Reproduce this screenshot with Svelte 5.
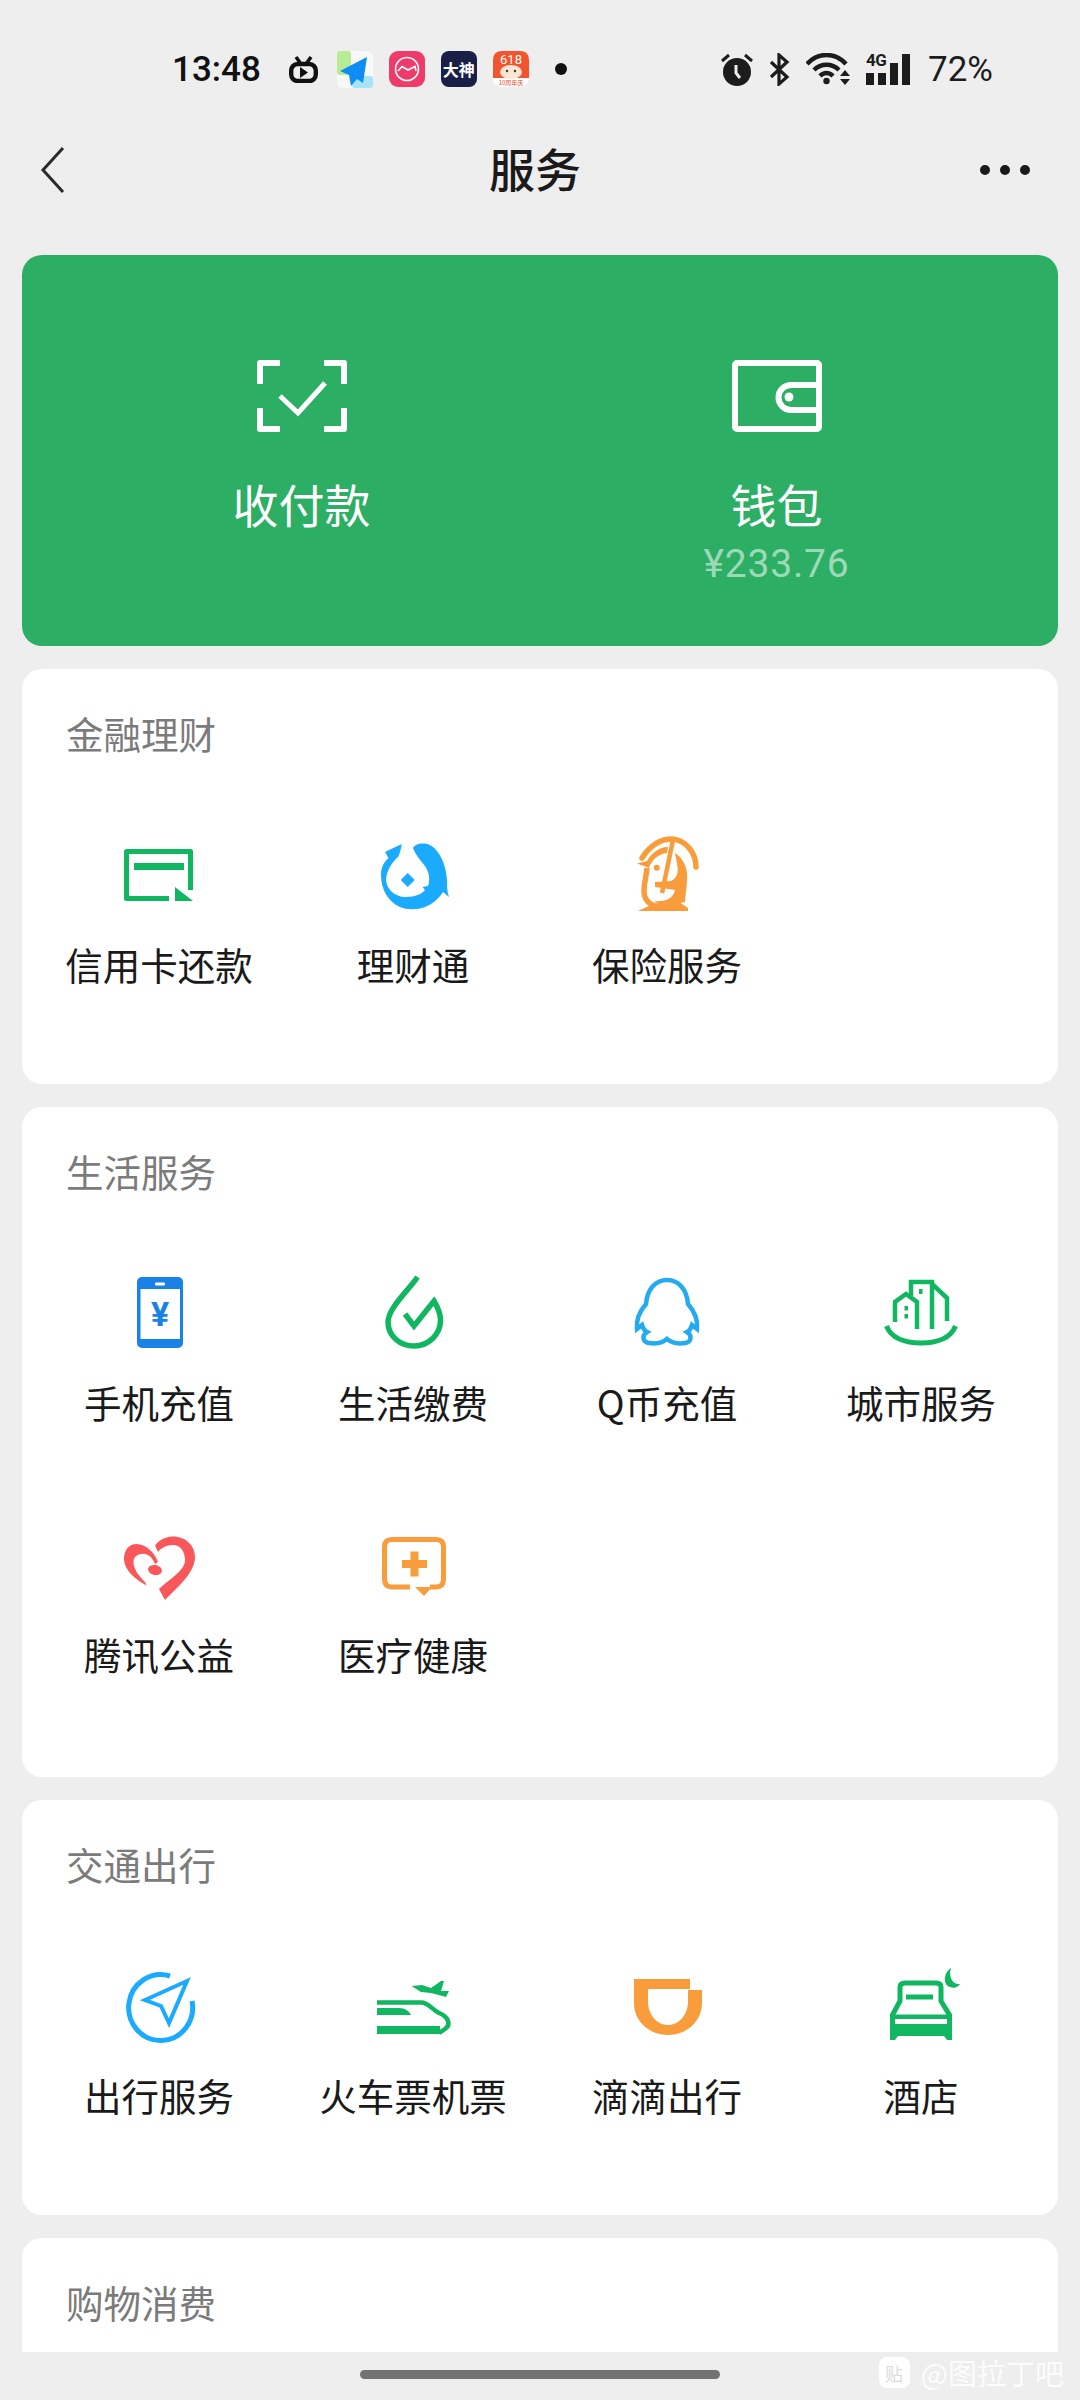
<script>
  // Service grid, grouped into sections
  const sections = [
    {
      title: "金融理财",
      items: [
        { icon: "card", label: "信用卡还款" },
        { icon: "fish", label: "理财通" },
        { icon: "shield", label: "保险服务" },
      ],
    },
    {
      title: "生活服务",
      items: [
        { icon: "phone", label: "手机充值" },
        { icon: "drop", label: "生活缴费" },
        { icon: "qq", label: "Q币充值" },
        { icon: "city", label: "城市服务" },
        { icon: "heart", label: "腾讯公益" },
        { icon: "medical", label: "医疗健康" },
      ],
    },
    {
      title: "交通出行",
      items: [
        { icon: "compass", label: "出行服务" },
        { icon: "train", label: "火车票机票" },
        { icon: "didi", label: "滴滴出行" },
        { icon: "hotel", label: "酒店" },
      ],
    },
    { title: "购物消费", items: [] },
  ];

  const GREEN = "#10b760";
  const BLUE = "#1aabff";
  const ORANGE = "#f99d3c";
</script>

{#snippet icon(name)}
  <svg class="cell-icon" viewBox="0 0 80 80">
    {#if name === "card"}
      <path d="M71.5 56V17.5H7.5V64.5H50" fill="none" stroke={GREEN} stroke-width="5" stroke-linejoin="round" />
      <rect x="15" y="29" width="50" height="7" fill={GREEN} />
      <path d="M56 53L74 67H56Z" fill={GREEN} />
    {:else if name === "fish"}
      <path
        d="M40 14C42 10 47 9 52 9.5C64 11 73 28 74 46C74 52 74 58 76 63L70 58C66 64 60 70 52 73C44 76 34 76 27 73C15 68 8 55 8 41C8 33 11 28 15.5 24L12 18L28.7 10C28 15 27 19 25.3 22.7C19 28 14 36 13 45C13 55 22 63 33 63C42 63 49 60 52 56L49.5 53L55 52C57.5 46 56 38 52 32C47 26 42 20 40 14Z"
        fill={BLUE}
      />
      <path d="M34.7 39L41.7 46L34.7 53L27.7 46Z" fill={BLUE} />
    {:else if name === "shield"}
      <g fill="none" stroke={ORANGE}>
        <path d="M15 24C24 10 34 5 45 5C60 6 69 20 69 33" stroke-width="5.5" stroke-linecap="round" />
        <path d="M46 6L35 59" stroke-width="4.5" />
        <path d="M20 34C19 44 17 50 17 57C17 65 22 72 32 72" stroke-width="5.5" />
      </g>
      <g fill={ORANGE}>
        <path d="M10 29.5L20 27C23 21 31 13 41 13L40 19C32 20 25 25 22 34Z" />
        <path d="M11 77C18 74 24 70 30 70L52 68L61 74V77Z" />
        <path d="M48 19C56 24 61 34 60 44C60 54 58 62 58 68L40 72C35 72 30 70 27 67C36 68 46 66 48 56L28 53V48L44 47C50 44 52 38 50 30Z" />
        <circle cx="29.7" cy="33.7" r="3" />
      </g>
    {:else if name === "phone"}
      <rect x="18" y="5" width="46" height="71" rx="5" fill="#1a82e6" />
      <rect x="21.5" y="17" width="39.5" height="50" fill="#fff" />
      <rect x="36" y="10.5" width="10" height="3" rx="1" fill="#fff" />
      <text x="41" y="54" class="yen">¥</text>
    {:else if name === "drop"}
      <path
        d="M44.5 5C36 18 15 36 15 50C15 64 27 74 41 74C56 74 67.5 62 67.5 48C67.5 41 64 34 61 29L41 54L32 42"
        fill="none"
        stroke={GREEN}
        stroke-width="5.5"
      />
    {:else if name === "qq"}
      <path
        d="M40 8C28 8 20 18 19 32C12 40 9 48 10 57L15 53C16 56 18 59 20 60C15 63 15 70 22 71C28 72 35 71 40 67C45 71 52 72 58 71C65 70 65 63 60 60C62 59 64 56 65 53L70 57C71 48 68 40 61 32C60 18 52 8 40 8Z"
        fill="none"
        stroke="#24aaf0"
        stroke-width="4.5"
      />
    {:else if name === "city"}
      <g fill="none" stroke={GREEN} stroke-width="4.5">
        <path d="M5.5 54C10 66 24 71 40 71C56 71 70 66 74.5 54" stroke-width="5" />
        <path d="M30 24V10H51V57" />
        <path d="M51 12L66 26V49" />
        <path d="M14 50V30L25 22L36 30V57" />
      </g>
      <g fill={GREEN}>
        <rect x="38" y="17" width="3.5" height="5" />
        <rect x="23.5" y="34" width="3.5" height="4.5" />
        <rect x="23.5" y="42" width="3.5" height="4.5" />
      </g>
    {:else if name === "heart"}
      <g fill="#f9575a">
        <path d="M36 21.5C41 15 48 12.5 54 12.5C67 12.5 76 22 76 33C76 48 60 62 46 76L40 65C52 54 66 46 66 36.5C66 28 62 21.5 55 21C48 20.5 42 24 39 28Z" />
        <path d="M39 38C36 29 27 20 17.5 20C9 20 5 27 5 35C5 46 16 55 27.5 61.5L26 58C20 52 14 45 14.5 37C15 32 20 29 26 30C31 31 34 35 36 40Z" />
        <ellipse cx="36" cy="46" rx="7" ry="5" transform="rotate(12 36 46)" />
      </g>
    {:else if name === "medical"}
      <path
        d="M37 63H19Q11.5 63 11.5 55V23Q11.5 15.5 19 15.5H63Q70.5 15.5 70.5 23V55Q70.5 63 63 63H57"
        fill="none"
        stroke={ORANGE}
        stroke-width="5"
      />
      <path d="M42 63H59L51 72Z" fill={ORANGE} />
      <rect x="29" y="36" width="25" height="8" fill={ORANGE} />
      <rect x="37.5" y="27.5" width="8" height="25" fill={ORANGE} />
    {:else if name === "compass"}
      <g fill="none" stroke={BLUE}>
        <path d="M51 11A32 33 0 1 0 73 36" stroke-width="5" />
        <path d="M68 16L26 35L42 41L50 58Z" stroke-width="4" />
      </g>
    {:else if name === "train"}
      <path d="M38.5 21L49 20L58 23L68 16H71L68 26L76 26L73 32L58 28L48 27Z" fill={GREEN} />
      <path d="M4 37.5H48C56 37.5 58 44 66 48C76 52 78 60 72 64L66 68" fill="none" stroke={GREEN} stroke-width="4.5" />
      <path d="M4 43H26C32 43 36 46 38 50H4Z" fill={GREEN} />
      <rect x="4" y="61" width="63" height="8" fill={GREEN} />
    {:else if name === "didi"}
      <path
        d="M7 14H63V24H21V36C21 50 30 60 41 60C52 60 61 50 61 36V25H75V38C75 56 60 70 41 70C22 70 7 56 7 38Z"
        fill={ORANGE}
      />
    {:else if name === "hotel"}
      <path d="M70 3C62 8 62 20 69 22C73 24 77 22 79 19C72 20 67 12 70 3Z" fill={GREEN} />
      <path d="M11.5 60V50L19 36V22Q19 18 24 18H55Q60 18 60 22V36L68.5 50V60" fill="none" stroke={GREEN} stroke-width="5" />
      <rect x="25" y="29.5" width="27" height="5" fill={GREEN} />
      <rect x="14" y="49.5" width="52" height="4.5" fill={GREEN} />
      <path d="M9 59H71V75H66L63 71H17L14 75H9Z" fill={GREEN} />
    {/if}
  </svg>
{/snippet}

<div class="screen">
  <div class="status">
    <span class="time">13:48</span>

    <svg class="s-tv" width="29" height="27" viewBox="0 0 29 27">
      <path d="M7 1L12 8M22 1L17 8" stroke="#111" stroke-width="3.5" />
      <rect x="2.2" y="8" width="24.6" height="17" rx="6.5" fill="none" stroke="#111" stroke-width="4.4" />
      <path d="M11 11L19 16.5L11 22Z" fill="#111" />
    </svg>
    <svg class="s-app" width="36" height="37" viewBox="0 0 36 37">
      <rect width="36" height="37" rx="6" fill="#fff" opacity="0.6" />
      <rect x="0" y="0" width="14" height="24" rx="3" fill="#b8eb96" />
      <rect x="15" y="25" width="21" height="12" rx="3" fill="#a5e4fb" />
      <path d="M30 6L3 20L12 24L14 35L20 28L26 32Z" fill="#0f8cf5" />
    </svg>
    <svg class="s-app" width="36" height="36" viewBox="0 0 36 36">
      <rect width="36" height="36" rx="9" fill="#ef3a6a" />
      <circle cx="18" cy="18" r="11.5" fill="none" stroke="#fff" stroke-width="1.6" />
      <path d="M9 20L13 15.5L19 19L26 15.5L27 20" fill="none" stroke="#fff" stroke-width="1.6" />
    </svg>
    <div class="s-dashen">大神</div>
    <svg class="s-app" width="36" height="36" viewBox="0 0 36 36">
      <rect width="36" height="36" rx="9" fill="#fff" />
      <path d="M0 9Q0 0 9 0H27Q36 0 36 9V27H0Z" fill="#f2552d" />
      <text x="18" y="13" class="s-618">618</text>
      <ellipse cx="18" cy="21" rx="11" ry="7" fill="#fbe6d6" />
      <circle cx="14" cy="20" r="1.2" fill="#5a2a1a" />
      <circle cx="22" cy="20" r="1.2" fill="#5a2a1a" />
      <text x="18" y="34" class="s-618-sub">10周年庆</text>
    </svg>
    <span class="s-dot"></span>

    <div class="status-right">
      <svg width="32" height="33" viewBox="0 0 32 33">
        <circle cx="16" cy="19" r="14" fill="#1c1c1c" />
        <path d="M1 8L8 2M31 8L24 2" stroke="#1c1c1c" stroke-width="3" />
        <path d="M15 12V20L19 25" fill="none" stroke="#eee" stroke-width="3" />
      </svg>
      <svg width="21" height="33" viewBox="0 0 21 33">
        <path d="M2 9L18 24L10 31V2L18 9L2 24" fill="none" stroke="#1c1c1c" stroke-width="3.2" />
      </svg>
      <svg width="45" height="32" viewBox="0 0 45 32">
        <g fill="none" stroke="#1c1c1c" stroke-width="4.5">
          <path d="M1 11C12 -1 29 -1 40 11" />
          <path d="M8 17C15 10 26 10 33 17" />
          <path d="M14 23C18 19 23 19 27 23" />
        </g>
        <circle cx="20.5" cy="28" r="3.2" fill="#1c1c1c" />
        <path d="M39 17L44 23H34ZM39 32L44 26H34Z" fill="#1c1c1c" />
      </svg>
      <div class="signal">
        <span class="net">4G</span>
        <i style="height: 12px"></i>
        <i style="height: 12px"></i>
        <i style="height: 22px"></i>
        <i style="height: 31px"></i>
      </div>
      <span class="battery">72%</span>
    </div>
  </div>

  <div class="nav">
    <svg class="back" width="26" height="48" viewBox="0 0 26 48">
      <path d="M23 2L3 24L23 46" fill="none" stroke="#2a2a2a" stroke-width="3" />
    </svg>
    <h1>服务</h1>
    <div class="more"><span></span><span></span><span></span></div>
  </div>

  <div class="content">
    <div class="hero">
      <div class="hero-item">
        <svg width="90" height="72" viewBox="0 0 90 72">
          <g fill="none" stroke="#fff" stroke-width="6">
            <path d="M23 3H3V24M67 3H87V24M23 69H3V48M67 69H87V48" stroke-linejoin="round" />
            <path d="M23 36L41 53L68 23" stroke-width="5" />
          </g>
        </svg>
        <span class="hero-label">收付款</span>
      </div>
      <div class="hero-item">
        <svg width="90" height="72" viewBox="0 0 90 72">
          <g fill="none" stroke="#fff" stroke-width="6">
            <rect x="3" y="3" width="84" height="66" rx="2" />
            <path d="M87 25H59A11 11 0 0 0 59 50H87" />
          </g>
          <circle cx="57" cy="37" r="4.5" fill="#fff" />
        </svg>
        <span class="hero-label">钱包</span>
        <span class="balance">¥233.76</span>
      </div>
    </div>

    {#each sections as section}
      <section class="card" class:tall={section.items.length > 4}>
        <h2>{section.title}</h2>
        {#if section.items.length}
          <div class="grid">
            {#each section.items as item}
              <div class="cell">
                {@render icon(item.icon)}
                <span class="cell-label">{item.label}</span>
              </div>
            {/each}
          </div>
        {/if}
      </section>
    {/each}
  </div>

  <div class="home-bar"><span></span></div>

  <div class="watermark">
    <span class="wm-badge">贴</span>
    <span>@图拉丁吧</span>
  </div>
</div>

<style>
  :global(body) {
    margin: 0;
    background: #eeeeee;
  }

  .screen {
    position: relative;
    height: 2400px;
    overflow: hidden;
    display: flex;
    flex-direction: column;
    background: #eeeeee;
    font-family: "Noto Sans CJK SC", "Noto Sans", sans-serif;
    color: #1a1a1a;
  }

  /* Status bar */
  .status {
    height: 115px;
    flex-shrink: 0;
    padding: 23px 87px 0 172px;
    box-sizing: border-box;
    display: flex;
    align-items: center;
    gap: 16px;
  }

  .time {
    font-family: Roboto, sans-serif;
    font-size: 35px;
    font-weight: 500;
    color: #111;
    margin-right: 12px;
  }

  .s-tv {
    margin-right: 3px;
  }

  .s-dashen {
    width: 36px;
    height: 36px;
    border-radius: 8px;
    background: #1a1f47;
    color: #fff;
    font-size: 16px;
    font-weight: 700;
    line-height: 36px;
    text-align: center;
    white-space: nowrap;
    overflow: hidden;
  }

  .s-618 {
    font-family: Roboto, sans-serif;
    font-size: 13px;
    text-anchor: middle;
    fill: #fff;
  }

  .s-618-sub {
    font-size: 6px;
    text-anchor: middle;
    fill: #e8452a;
  }

  .s-dot {
    width: 12px;
    height: 12px;
    margin-left: 10px;
    border-radius: 50%;
    background: #111;
  }

  .status-right {
    margin-left: auto;
    display: flex;
    align-items: center;
    gap: 16px;
  }

  .signal {
    position: relative;
    width: 46px;
    height: 32px;
    display: flex;
    align-items: flex-end;
    gap: 4.5px;
    margin-left: -1px;
  }

  .signal i {
    width: 7.5px;
    background: #1c1c1c;
  }

  .net {
    position: absolute;
    left: 0;
    top: -3px;
    font-family: Roboto, sans-serif;
    font-size: 17px;
    font-weight: 700;
    letter-spacing: -0.5px;
    color: #1c1c1c;
  }

  .battery {
    font-family: Roboto, sans-serif;
    font-size: 35px;
    color: #1c1c1c;
  }

  /* Title row */
  .nav {
    position: relative;
    height: 110px;
    flex-shrink: 0;
    display: flex;
    align-items: center;
    justify-content: center;
  }

  .nav h1 {
    margin: 0 10px 6px 0;
    font-size: 46px;
    font-weight: 500;
    color: #1a1a1a;
  }

  .back {
    position: absolute;
    left: 40px;
    top: 31px;
  }

  .more {
    position: absolute;
    right: 50px;
    top: 50px;
    display: flex;
    gap: 10px;
  }

  .more span {
    width: 10px;
    height: 10px;
    border-radius: 50%;
    background: #1a1a1a;
  }

  .content {
    flex: 1;
    min-height: 0;
    overflow: hidden;
    padding: 30px 22px 0;
    display: flex;
    flex-direction: column;
    gap: 23px;
  }

  .hero {
    height: 391px;
    flex-shrink: 0;
    box-sizing: border-box;
    padding: 105px 44px 0 42px;
    border-radius: 20px;
    background: #2cae64;
    display: grid;
    grid-template-columns: 1fr 1fr;
  }

  .hero-item {
    display: flex;
    flex-direction: column;
    align-items: center;
    color: #fff;
  }

  .hero-label {
    margin-top: 36px;
    font-size: 46px;
    line-height: 70px;
  }

  .balance {
    margin-top: 3px;
    font-family: Roboto, sans-serif;
    font-size: 39px;
    line-height: 46px;
    letter-spacing: 0.8px;
    color: rgba(255, 255, 255, 0.55);
  }

  .card {
    flex-shrink: 0;
    padding: 44px 10px 95px;
    border-radius: 20px;
    background: #fff;
  }

  .card.tall {
    padding-bottom: 97.5px;
  }

  .card h2 {
    margin: 0 0 0 34px;
    font-size: 37.5px;
    font-weight: 400;
    line-height: 40px;
    color: #7b7b7b;
  }

  .grid {
    margin-top: 81px;
    display: grid;
    grid-template-columns: repeat(4, 1fr);
    row-gap: 97px;
  }

  .cell {
    display: flex;
    flex-direction: column;
    align-items: center;
  }

  .cell-icon {
    width: 80px;
    height: 80px;
  }

  .cell-label {
    margin-top: 25px;
    font-size: 37.5px;
    line-height: 50px;
    white-space: nowrap;
    color: #1a1a1a;
  }

  .yen {
    font-family: Roboto, sans-serif;
    font-size: 34px;
    font-weight: 700;
    text-anchor: middle;
    fill: #1a82e6;
  }

  /* Home indicator */
  .home-bar {
    height: 48px;
    flex-shrink: 0;
    display: flex;
    justify-content: center;
    padding-top: 18px;
    box-sizing: border-box;
    background: #eeeeee;
  }

  .home-bar span {
    width: 360px;
    height: 9px;
    border-radius: 5px;
    background: #727272;
  }

  .watermark {
    position: absolute;
    right: 16px;
    bottom: 12px;
    display: flex;
    align-items: center;
    gap: 11px;
    font-size: 29px;
    line-height: 32px;
    color: rgba(255, 255, 255, 0.85);
  }

  .wm-badge {
    width: 31px;
    height: 31px;
    border-radius: 8px;
    background: rgba(255, 255, 255, 0.9);
    color: #dcdcdc;
    font-size: 18px;
    text-align: center;
  }
</style>
